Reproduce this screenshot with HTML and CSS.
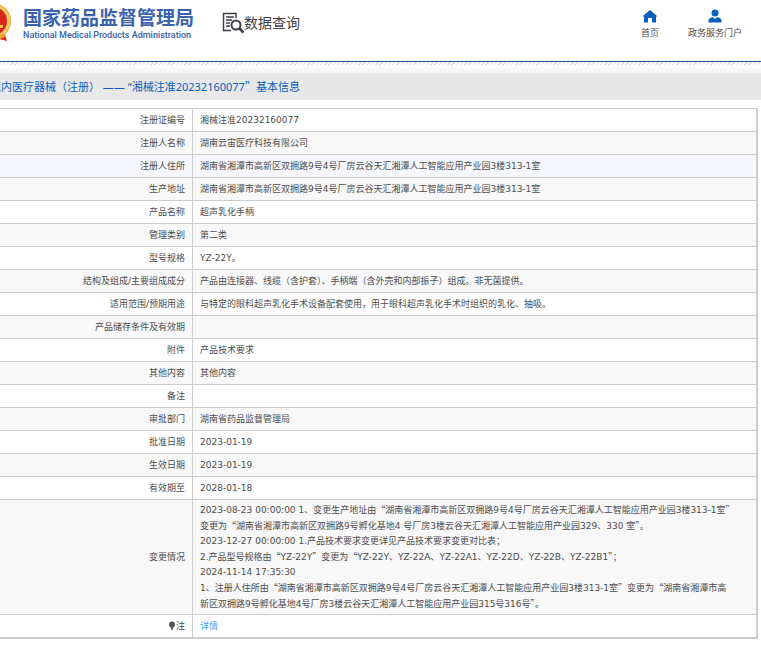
FILE: index.html
```html
<!DOCTYPE html>
<html lang="zh-CN">
<head>
    <meta charset="UTF-8">
    <meta name="viewport" content="width=device-width, initial-scale=1.0">
    <title>国家药品监督管理局 数据查询</title>
    <link rel="stylesheet" href="styles.css">
</head>
<body>
    <header class="header">
        <a class="brand" href="#">
            <svg class="emblem" width="38" height="40" viewBox="0 0 38 40">
                <path d="M8 29 L5 38 L13 36 L19 39 L25 36 L33 38 L30 29 Z" fill="#d8261c"/>
                <circle cx="19" cy="18" r="18" fill="#e9a53a"/>
                <circle cx="19" cy="18" r="17" fill="#f6cf63"/>
                <circle cx="19" cy="18" r="14" fill="#d9241b"/>
                <path d="M19 7l2 5h5l-4 3 2 5-5-3-5 3 2-5-4-3h5z" fill="#f7d25c"/>
                <path d="M9 25h20v-3h-3v-2H12v2H9z" fill="#f3bd48"/>
                <path d="M8 30q11 6 22 0l1 4q-12 5-24 0z" fill="#e9a53a"/>
            </svg>
            <span class="brand-text">
                <span class="brand-cn">国家药品监督管理局</span>
                <span class="brand-en">National Medical Products Administration</span>
            </span>
        </a>
        <a class="search-title" href="#">
            <svg width="22" height="22" viewBox="0 0 22 22" fill="none" stroke="#3f4147">
                <path d="M14 6V1.5H1.500V18.500H9" stroke-width="1.5"/>
                <path d="M4 5h8M4 8h6M4 11h4M4 14h4" stroke-width="1.3"/>
                <circle cx="14" cy="13" r="4.500" stroke-width="2"/>
                <path d="M17.500 16.500l4 4" stroke-width="2.600"/>
            </svg>
            <span>数据查询</span>
        </a>
        <nav class="nav">
            <a href="#">
                <svg width="14" height="14" viewBox="0 0 14 14" fill="#0a5fbe">
                    <path d="M7 1L0.500 6.500V8H1V13.500H5V9H9V13.500H13V8H13.500V6.500Z"/>
                </svg>
                首页
            </a>
            <a href="#">
                <svg width="14" height="14" viewBox="0 0 14 14" fill="#0a5fbe">
                    <circle cx="7" cy="4" r="3.500"/>
                    <path d="M0.500 13.500V11Q1 9 4.500 8L7 10L9.500 8Q13 9 13.500 11V13.500Z"/>
                </svg>
                政务服务门户
            </a>
        </nav>
    </header>
    <div class="stripe"></div>

    <h1 class="crumb">境内医疗器械（注册） —— “湘械注准20232160077<span class="quote">”</span>基本信息</h1>

    <main class="content">
        <table class="info">
            <tr><th scope="row">注册证编号</th><td>湘械注准20232160077</td></tr>
            <tr><th scope="row">注册人名称</th><td>湖南云宙医疗科技有限公司</td></tr>
            <tr class="active"><th scope="row">注册人住所</th><td>湖南省湘潭市高新区双拥路9号4号厂房云谷天汇湘潭人工智能应用产业园3楼313-1室</td></tr>
            <tr><th scope="row">生产地址</th><td>湖南省湘潭市高新区双拥路9号4号厂房云谷天汇湘潭人工智能应用产业园3楼313-1室</td></tr>
            <tr><th scope="row">产品名称</th><td>超声乳化手柄</td></tr>
            <tr><th scope="row">管理类别</th><td>第二类</td></tr>
            <tr><th scope="row">型号规格</th><td>YZ-22Y。</td></tr>
            <tr><th scope="row">结构及组成/主要组成成分</th><td>产品由连接器、线缆（含护套）、手柄端（含外壳和内部振子）组成。非无菌提供。</td></tr>
            <tr><th scope="row">适用范围/预期用途</th><td>与特定的眼科超声乳化手术设备配套使用，用于眼科超声乳化手术时组织的乳化、抽吸。</td></tr>
            <tr><th scope="row">产品储存条件及有效期</th><td></td></tr>
            <tr><th scope="row">附件</th><td>产品技术要求</td></tr>
            <tr><th scope="row">其他内容</th><td>其他内容</td></tr>
            <tr><th scope="row">备注</th><td></td></tr>
            <tr><th scope="row">审批部门</th><td>湖南省药品监督管理局</td></tr>
            <tr><th scope="row">批准日期</th><td>2023-01-19</td></tr>
            <tr><th scope="row">生效日期</th><td>2023-01-19</td></tr>
            <tr><th scope="row">有效期至</th><td>2028-01-18</td></tr>
            <tr class="changes">
                <th scope="row">变更情况</th>
                <td>
                    2023-08-23 00:00:00 1、变更生产地址由<span class="quote">“</span>湖南省湘潭市高新区双拥路9号4号厂房云谷天汇湘潭人工智能应用产业园3楼313-1室<span class="quote">”</span><br>
                    变更为<span class="quote">“</span>湖南省湘潭市高新区双拥路9号孵化基地4 号厂房3楼云谷天汇湘潭人工智能应用产业园329、330 室<span class="quote">”</span>。<br>
                    2023-12-27 00:00:00 1.产品技术要求变更详见产品技术要求变更对比表；<br>
                    2.产品型号规格由<span class="quote">“</span>YZ-22Y<span class="quote">”</span>变更为<span class="quote">“</span>YZ-22Y、YZ-22A、YZ-22A1、YZ-22D、YZ-22B、YZ-22B1<span class="quote">”</span>；<br>
                    2024-11-14 17:35:30<br>
                    1、注册人住所由<span class="quote">“</span>湖南省湘潭市高新区双拥路9号4号厂房云谷天汇湘潭人工智能应用产业园3楼313-1室<span class="quote">”</span>变更为<span class="quote">“</span>湖南省湘潭市高<br>
                    新区双拥路9号孵化基地4号厂房3楼云谷天汇湘潭人工智能应用产业园315号316号<span class="quote">”</span>。
                </td>
            </tr>
            <tr>
                <th scope="row"><svg class="bulb" width="8" height="9" viewBox="0 0 8 9" fill="#555"><circle cx="4" cy="3.500" r="3"/><path d="M2.500 6h3l-1 3h-1z"/></svg>注</th>
                <td><a class="detail" href="#">详情</a></td>
            </tr>
        </table>
    </main>
</body>
</html>
```

FILE: styles.css
```css
body {
    margin: 0;
    background: #fff;
    color: #4d4d4d;
    font-family: "DejaVu Sans", "Noto Sans CJK SC", sans-serif;
    font-size: 9px;
    line-height: 15px;
    overflow-x: hidden;
}
a {
    color: inherit;
    text-decoration: none;
}
.header {
    display: flex;
    align-items: flex-start;
    height: 61px;
    border-bottom: 1px solid #1d5796;
}
.brand {
    display: flex;
    gap: 11px;
    margin-left: -26px;
    padding-top: 3px;
}
.brand-text {
    display: flex;
    flex-direction: column;
    padding-top: 2px;
    color: #3a62ad;
}
.brand-cn {
    font-family: "Noto Sans CJK SC", sans-serif;
    font-size: 19px;
    font-weight: bold;
    line-height: 23px;
}
.brand-en {
    font-family: Roboto, sans-serif;
    font-size: 9px;
    font-weight: 500;
    line-height: 15px;
}
.search-title {
    display: flex;
    align-items: center;
    margin-left: 28px;
    padding-top: 12px;
    color: #3f4147;
    font-size: 14px;
    line-height: 20px;
}
.nav {
    display: flex;
    gap: 29px;
    margin-left: auto;
    padding: 9px 19px 0 0;
}
.nav a {
    display: flex;
    flex-direction: column;
    align-items: center;
    gap: 3px;
}
.stripe {
    height: 11px;
    background:
        repeating-linear-gradient(135deg, #dcdfe9 0 1px, transparent 1px 3px) top / 100% 3px no-repeat,
        linear-gradient(#fff, #f5f5f5);
}
.crumb {
    margin: 0 0 8px;
    text-indent: -10px;
    background: #e8e8e8;
    color: #0a5fbe;
    font-family: "Noto Sans", "Noto Sans CJK SC", sans-serif;
    font-size: 11px;
    font-weight: normal;
    line-height: 27px;
    white-space: nowrap;
}
.quote {
    font-family: "Noto Sans CJK SC", sans-serif;
}
.content {
    padding-right: 3px;
}
.info {
    width: 100%;
    border-collapse: separate;
    border-spacing: 0;
    table-layout: fixed;
    border: solid #ccc;
    border-width: 1px 2px 1px 0;
}
.info th,
.info td {
    height: 22px;
    padding: 0 7px;
    border-bottom: 1px solid #ccc;
    text-align: left;
    font-weight: normal;
}
.info th {
    width: 178px;
    border-right: 1px solid #ccc;
    text-align: right;
}
.info tr:nth-child(even) {
    background: #f8f8f8;
}
.info tr.active {
    background: #f5f7fd;
}
.info .changes th,
.info .changes td {
    height: 114px;
    white-space: nowrap;
}
.bulb {
    vertical-align: -1px;
}
.detail {
    color: #409eff;
}
```
